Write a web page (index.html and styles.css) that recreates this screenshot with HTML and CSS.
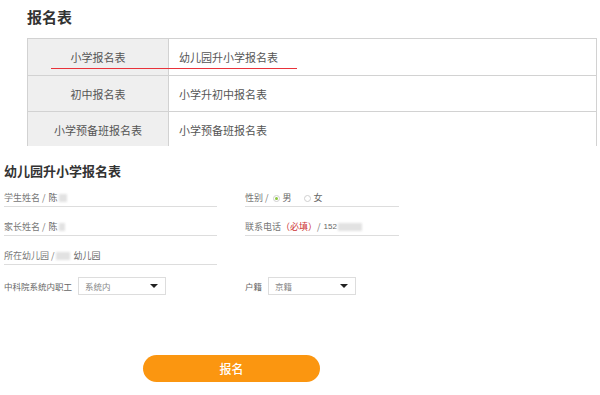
FILE: index.html
```html
<!DOCTYPE html>
<html lang="zh">
<head>
<meta charset="utf-8">
<title>报名表</title>
<link rel="stylesheet" href="styles.css">
</head>
<body>
<section class="top">
  <h1 class="title">报名表</h1>
  <div class="table-wrap">
    <div class="row first">
      <div class="cell head">小学报名表</div>
      <div class="cell body">幼儿园升小学报名表</div>
    </div>
    <div class="row">
      <div class="cell head">初中报名表</div>
      <div class="cell body">小学升初中报名表</div>
    </div>
    <div class="row">
      <div class="cell head">小学预备班报名表</div>
      <div class="cell body">小学预备班报名表</div>
    </div>
    <div class="red-line"></div>
  </div>
</section>

<section class="form">
  <h2 class="form-title">幼儿园升小学报名表</h2>
  <div class="grid">
    <div class="field">学生姓名 / <span class="val">陈</span><span class="blur w8"></span></div>
    <div class="field">性别 / <span class="radio on"></span><span class="val">男</span><span class="radio off"></span><span class="val">女</span></div>
    <div class="field">家长姓名 / <span class="val">陈</span><span class="blur w6"></span></div>
    <div class="field">联系电话<span class="req">（必填）</span> / <span class="val num">152</span><span class="blur w24"></span></div>
    <div class="field">所在幼儿园 / <span class="blur w14"></span><span class="val">幼儿园</span></div>
    <div class="empty"></div>
    <div class="sel-row">
      <span class="sel-label">中科院系统内职工</span>
      <div class="select w88"><span>系统内</span><span class="arrow"></span></div>
    </div>
    <div class="sel-row">
      <span class="sel-label">户籍</span>
      <div class="select w88"><span>京籍</span><span class="arrow"></span></div>
    </div>
  </div>
  <button class="submit" type="button">报名</button>
</section>
</body>
</html>
```

FILE: styles.css
```css
* { box-sizing: border-box; }
html, body { margin: 0; padding: 0; background: #fff; }
body {
  width: 600px;
  height: 395px;
  overflow: hidden;
  font-family: "Noto Sans CJK SC", "Noto Sans", sans-serif;
  color: #555;
}

.top { padding-left: 27px; padding-top: 7px; }
.title {
  margin: 0;
  font-size: 15px;
  line-height: 20px;
  font-weight: 700;
  color: #333;
}
.table-wrap {
  position: relative;
  margin-top: 11px;
  width: 570px;
  height: 108px;
  overflow: hidden;
  border-top: 1px solid #d2d2d2;
  border-right: 1px solid #d2d2d2;
  border-left: 1px solid #d2d2d2;
}
.row {
  display: flex;
  height: 36px;
  border-bottom: 1px solid #d2d2d2;
}
.row.first { height: 37px; }
.cell {
  display: flex;
  align-items: center;
  font-size: 11px;
  color: #555;
}
.cell.head {
  width: 141px;
  justify-content: center;
  background: #efefef;
  border-right: 1px solid #d2d2d2;
}
.cell.body { padding-left: 10px; flex: 1; }
.red-line {
  position: absolute;
  left: 23px;
  top: 29px;
  width: 246px;
  height: 1px;
  background: #e8323a;
}

.form { padding-top: 15px; padding-left: 4px; }
.form-title {
  margin: 0;
  font-size: 13px;
  line-height: 20px;
  font-weight: 700;
  color: #333;
}
.grid {
  margin-top: 9px;
  display: grid;
  grid-template-columns: 213px 154px;
  column-gap: 28px;
  row-gap: 12px;
}
.field {
  height: 17px;
  border-bottom: 1px solid #ddd;
  font-size: 9px;
  line-height: 16px;
  color: #777;
  display: flex;
  align-items: center;
  white-space: nowrap;
}
.val { color: #666; margin-left: 3px; }
.num { font-family: "Liberation Sans", sans-serif; font-size: 8px; }
.req { color: #cc3333; }
.blur {
  display: inline-block;
  height: 8px;
  background: #e2e2e2;
  filter: blur(1px);
  margin-left: 1px;
}
.w6 { width: 6px; }
.w8 { width: 8px; }
.w14 { width: 14px; margin-right: 1px; }
.w24 { width: 24px; }
.radio {
  display: inline-block;
  width: 7px;
  height: 7px;
  border-radius: 50%;
  border: 1px solid #cfcfcf;
  margin-left: 4px;
  position: relative;
}
.radio.off { margin-left: 12px; }
.radio.on::after {
  content: "";
  position: absolute;
  left: 1px;
  top: 1px;
  width: 3px;
  height: 3px;
  border-radius: 50%;
  background: #8cc63f;
}
.empty { height: 17px; }
.sel-row {
  display: flex;
  align-items: center;
  height: 18px;
  font-size: 8.5px;
  color: #666;
  white-space: nowrap;
}
.sel-label { margin-right: 6px; }
.select {
  height: 18px;
  border: 1px solid #ddd;
  display: flex;
  align-items: center;
  justify-content: space-between;
  padding: 0 7px 0 6px;
  font-size: 8.5px;
  color: #888;
}
.w88 { width: 88px; }
.arrow {
  width: 0;
  height: 0;
  border-left: 4px solid transparent;
  border-right: 4px solid transparent;
  border-top: 4px solid #222;
}
.submit {
  display: block;
  margin: 60px 0 0 139px;
  width: 177px;
  height: 27px;
  border: none;
  border-radius: 14px;
  background: #fb9610;
  color: #fff;
  font-family: "Noto Sans CJK SC", sans-serif;
  font-size: 12px;
  font-weight: 500;
  padding: 0;
}
```
